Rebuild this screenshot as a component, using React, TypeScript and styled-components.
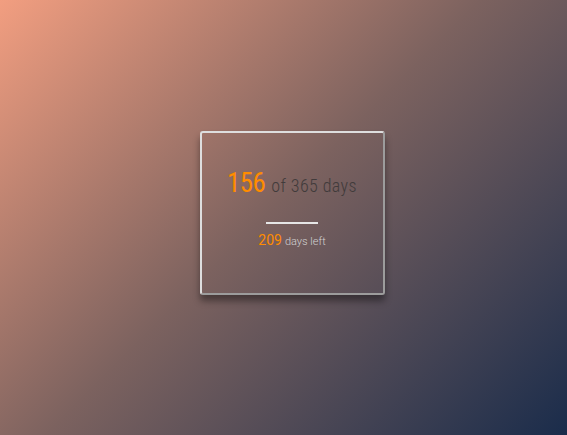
import React from "react";
import styled, { createGlobalStyle } from "styled-components";

const Global = createGlobalStyle`
  html, body { margin: 0; padding: 0; height: 100%; }
  body {
    font-family: Roboto, "Liberation Sans", sans-serif;
    background: linear-gradient(135deg, #f29e80 0%, #7c625f 48%, #1a2c4b 100%);
    background-attachment: fixed;
  }
  #root { height: 100%; }
`;

const Page = styled.div`
  height: 435px;
  width: 567px;
  display: flex;
  align-items: center;
  justify-content: center;
  box-sizing: border-box;
  padding: 0 0 10px 17px;
`;

const Card = styled.div`
  box-sizing: border-box;
  width: 185px;
  height: 164px;
  border: 2px solid;
  border-color: #dedede #9c9c9c #9c9c9c #dedede;
  border-radius: 3px;
  box-shadow: 0 6px 7px rgba(0, 0, 0, 0.4);
  display: flex;
  flex-direction: column;
  align-items: center;
  padding-top: 37px;
`;

const Main = styled.div`
  display: flex;
  align-items: baseline;
  gap: 6px;
  line-height: 1;
`;

const Big = styled.span<{ $size: number; $stretch: number; $spacing: number }>`
  color: #ff8c00;
  font-size: ${(p) => p.$size}px;
  font-weight: 400;
  font-stretch: ${(p) => p.$stretch}%;
  letter-spacing: ${(p) => p.$spacing}px;
`;

const Muted = styled.span<{ $size: number; $color: string; $stretch: number; $spacing: number }>`
  color: ${(p) => p.$color};
  font-size: ${(p) => p.$size}px;
  font-weight: 300;
  font-stretch: ${(p) => p.$stretch}%;
  letter-spacing: ${(p) => p.$spacing}px;
`;

const Divider = styled.div`
  width: 52px;
  height: 2px;
  background: #e6e6e6;
  margin-top: 25px;
`;

const Sub = styled.div`
  display: flex;
  align-items: baseline;
  gap: 3px;
  margin-top: 9px;
  line-height: 1;
`;

export default function App() {
  return (
    <>
      <Global />
      <Page>
        <Card>
          <Main>
            <Big $size={27} $stretch={85} $spacing={-0.6}>156</Big>
            <Muted $size={18} $color="#413b3b" $stretch={85} $spacing={0.4}>of 365 days</Muted>
          </Main>
          <Divider />
          <Sub>
            <Big $size={14} $stretch={100} $spacing={0}>209</Big>
            <Muted $size={11} $color="#d2d2d2" $stretch={100} $spacing={0}>days left</Muted>
          </Sub>
        </Card>
      </Page>
    </>
  );
}
